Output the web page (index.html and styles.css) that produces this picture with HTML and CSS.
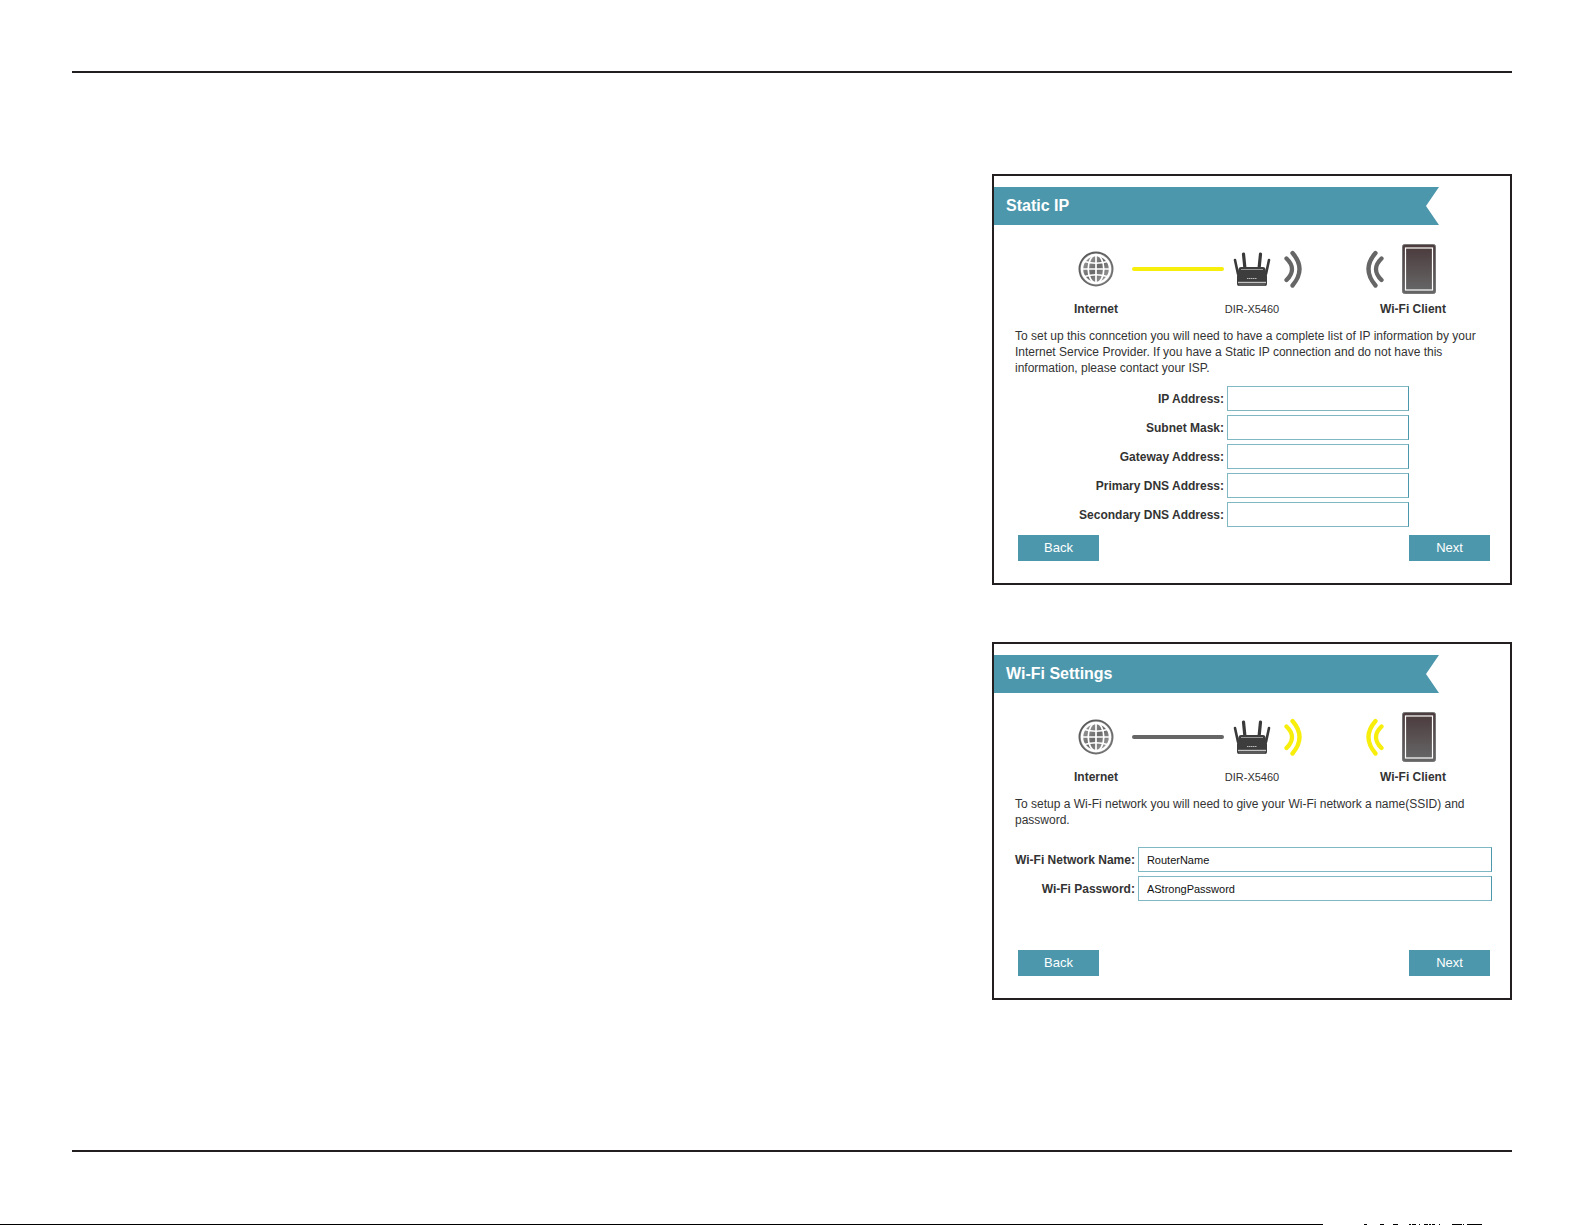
FILE: index.html
```html
<!DOCTYPE html>
<html lang="en">
<head>
    <meta charset="UTF-8">
    <meta name="viewport" content="width=device-width, initial-scale=1.0">
    <title>Setup Wizard</title>
    <link rel="stylesheet" href="styles.css">
</head>
<body>
    <!-- shared icons -->
    <svg class="defs" width="0" height="0" aria-hidden="true">
        <defs>
            <linearGradient id="screen" x1="0" y1="0" x2="0" y2="1">
                <stop offset="0" stop-color="#4c3c3e"/>
                <stop offset="1" stop-color="#666"/>
            </linearGradient>
            <linearGradient id="ball" x1="0" y1="0" x2="1" y2="1">
                <stop offset="0" stop-color="#aaa"/>
                <stop offset="0.5" stop-color="#6a6a6a"/>
                <stop offset="1" stop-color="#aaa"/>
            </linearGradient>
            <linearGradient id="rim" x1="0" y1="0" x2="1" y2="1">
                <stop offset="0" stop-color="#555"/>
                <stop offset="1" stop-color="#777"/>
            </linearGradient>
            <symbol id="globe" viewBox="0 0 36 36">
                <circle cx="18" cy="18" r="16.6" fill="#aaa" stroke="url(#rim)" stroke-width="1.8"/>
                <circle cx="18" cy="18" r="14" fill="url(#ball)" stroke="#fff" stroke-width="2.4"/>
                <g fill="none" stroke="#fff" stroke-width="1.7">
                    <path d="M18 4v28M4 18h28"/>
                    <ellipse cx="18" cy="18" rx="7.8" ry="14"/>
                    <path d="M6.5 10.5Q18 14 29.5 10.5M6.5 25.5Q18 22 29.5 25.5"/>
                </g>
            </symbol>
            <symbol id="router" viewBox="0 0 38 36">
                <g stroke="#3a3a3a" stroke-linecap="round" fill="none">
                    <path d="M2 9L5 23M36 9L33 23" stroke-width="2.6"/>
                    <path d="M10.5 3L12 18M27.5 3L26 18" stroke-width="3.2"/>
                </g>
                <path d="M8 16h22q2 0 2.500 2l1.500 7v8q0 2-2 2h-26q-2 0-2-2v-8l1.500-7q.5-2 2.500-2z" fill="#3d3d3d"/>
                <path d="M8 18.500h22" stroke="#999"/>
                <path d="M5 31.500h28" stroke="#c4c4c4" stroke-width="1.400"/>
                <path d="M14 27.500h10" stroke="#bbb" stroke-dasharray="1.500 .5"/>
                <path d="M6 34h26" stroke="#666" stroke-width="1.500"/>
            </symbol>
            <symbol id="waves" viewBox="0 0 19 38">
                <g fill="none" stroke="currentColor" stroke-width="4.300" stroke-linecap="round">
                    <path d="M2.500 8.500Q13.500 19 2.500 30"/>
                    <path d="M8.500 3Q22.500 19 8.500 35.500"/>
                </g>
            </symbol>
            <symbol id="tablet" viewBox="0 0 34 50">
                <rect x="0.500" y="0.500" width="33" height="49" rx="2" fill="url(#screen)" stroke="#777"/>
                <rect x="3.500" y="4" width="27" height="42" fill="url(#screen)" stroke="#fff" stroke-width="1.200"/>
            </symbol>
        </defs>
    </svg>

    <main class="page">
        <section class="panel">
            <h2 class="ribbon">Static IP</h2>
            <div class="network">
                <div class="icon"><svg width="36" height="36"><use href="#globe"/></svg></div>
                <div class="icon"><span class="cable active"></span></div>
                <div class="icon"><svg width="38" height="36"><use href="#router"/></svg></div>
                <div class="signal">
                    <svg width="19" height="38"><use href="#waves"/></svg>
                    <svg class="flip" width="19" height="38"><use href="#waves"/></svg>
                </div>
                <div class="icon client"><svg width="34" height="50"><use href="#tablet"/></svg></div>
                <span class="name">Internet</span>
                <span></span>
                <span class="name model">DIR-X5460</span>
                <span></span>
                <span class="name">Wi-Fi Client</span>
            </div>
            <p class="intro">To set up this conncetion you will need to have a complete list of IP information by your Internet Service Provider. If you have a Static IP connection and do not have this information, please contact your ISP.</p>
            <form>
                <div class="fields static-fields">
                    <label for="ip">IP Address:</label>
                    <input type="text" id="ip">
                    <label for="mask">Subnet Mask:</label>
                    <input type="text" id="mask">
                    <label for="gateway">Gateway Address:</label>
                    <input type="text" id="gateway">
                    <label for="dns1">Primary DNS Address:</label>
                    <input type="text" id="dns1">
                    <label for="dns2">Secondary DNS Address:</label>
                    <input type="text" id="dns2">
                </div>
                <div class="buttons">
                    <button type="button">Back</button>
                    <button type="button">Next</button>
                </div>
            </form>
        </section>

        <section class="panel">
            <h2 class="ribbon">Wi-Fi Settings</h2>
            <div class="network">
                <div class="icon"><svg width="36" height="36"><use href="#globe"/></svg></div>
                <div class="icon"><span class="cable"></span></div>
                <div class="icon"><svg width="38" height="36"><use href="#router"/></svg></div>
                <div class="signal active">
                    <svg width="19" height="38"><use href="#waves"/></svg>
                    <svg class="flip" width="19" height="38"><use href="#waves"/></svg>
                </div>
                <div class="icon client"><svg width="34" height="50"><use href="#tablet"/></svg></div>
                <span class="name">Internet</span>
                <span></span>
                <span class="name model">DIR-X5460</span>
                <span></span>
                <span class="name">Wi-Fi Client</span>
            </div>
            <p class="intro">To setup a Wi-Fi network you will need to give your Wi-Fi network a name(SSID) and password.</p>
            <form>
                <div class="fields wifi-fields">
                    <label for="ssid">Wi-Fi Network Name:</label>
                    <input type="text" id="ssid" value="RouterName">
                    <label for="password">Wi-Fi Password:</label>
                    <input type="text" id="password" value="AStrongPassword">
                </div>
                <div class="buttons">
                    <button type="button">Back</button>
                    <button type="button">Next</button>
                </div>
            </form>
        </section>
    </main>

    <svg class="edge" viewBox="0 0 1585 1" preserveAspectRatio="none" aria-hidden="true">
        <path d="M0 0h1323v1H0zM1364 0h3v1h-3zM1380 0h4v1h-4zM1393 0h5v1h-5zM1409 0h2v1h-2zM1412 0h4v1h-4zM1419 0h1v1h-1zM1424 0h4v1h-4zM1429 0h2v1h-2zM1432 0h3v1h-3zM1439 0h1v1h-1zM1452 0h10v1h-10zM1463 0h1v1h-1zM1467 0h15v1h-15z"/>
    </svg>
</body>
</html>
```

FILE: styles.css
```css
* {
    box-sizing: border-box;
}
body {
    display: flex;
    flex-direction: column;
    justify-content: space-between;
    min-height: 100vh;
    margin: 0;
    padding-top: 71px;
    font-family: "Liberation Sans", Arial, sans-serif;
    font-size: 12px;
    line-height: 16px;
    color: #333;
    background: #fff;
}
svg {
    display: block;
}
.defs {
    position: absolute;
}
.page {
    display: flex;
    flex-direction: column;
    align-items: flex-end;
    gap: 57px;
    margin: 0 73px 0 72px;
    padding: 101px 0 150px;
    border-top: 2px solid #231f20;
    border-bottom: 2px solid #231f20;
}
.panel {
    width: 100%;
    max-width: 520px;
    padding: 11px 0 22px;
    border: 2px solid #231f20;
}
.ribbon {
    width: 445px;
    margin: 0;
    padding: 0 12px;
    font-size: 16px;
    line-height: 38px;
    color: #fff;
    background: #4d97ac;
    clip-path: polygon(0 0, 100% 0, calc(100% - 13px) 50%, 100% 100%, 0 100%);
}

/* internet - router - client */
.network {
    display: grid;
    grid-template-columns: 52px 102px 56px 1fr 66px;
    row-gap: 7px;
    padding: 19px 64px 0 76px;
}
.icon {
    display: flex;
    justify-content: center;
    align-items: center;
    height: 50px;
}
.icon.client {
    justify-content: flex-end;
    padding-right: 10px;
}
.cable {
    width: 100%;
    height: 4px;
    margin-left: 10px;
    border-radius: 2px;
    background: #666;
}
.cable.active {
    background: #f7ee0c;
}
.signal {
    display: flex;
    justify-content: space-between;
    align-items: center;
    margin-right: -4px;
    padding-left: 4px;
    color: #666;
}
.signal.active {
    color: #f7ee0c;
}
.flip {
    transform: scaleX(-1);
}
.name {
    font-weight: bold;
    text-align: center;
    white-space: nowrap;
}
.name.model {
    font-size: 11px;
    font-weight: normal;
}

.intro {
    margin: 11px 16px 0 21px;
}
.fields {
    display: grid;
    align-items: center;
    gap: 4px 3px;
    padding: 0 18px 0 21px;
}
.static-fields {
    grid-template-columns: 209px 182px;
    margin: 10px 0 8px;
}
.wifi-fields {
    grid-template-columns: auto 1fr;
    margin: 19px 0 49px;
}
.fields label {
    font-weight: bold;
    text-align: right;
}
.fields input {
    width: 100%;
    height: 25px;
    padding: 0 8px;
    font: inherit;
    font-size: 11px;
    color: #111;
    border: 1px solid #7fb8c2;
    border-right-color: #4d97ac;
    background: #fff;
}
.buttons {
    display: flex;
    justify-content: space-between;
    padding: 0 20px 0 24px;
}
.buttons button {
    width: 81px;
    height: 26px;
    padding: 0;
    font: inherit;
    font-size: 13px;
    color: #fff;
    border: 0;
    background: #4d97ac;
}
.edge {
    width: 100%;
    height: 1px;
}
```
